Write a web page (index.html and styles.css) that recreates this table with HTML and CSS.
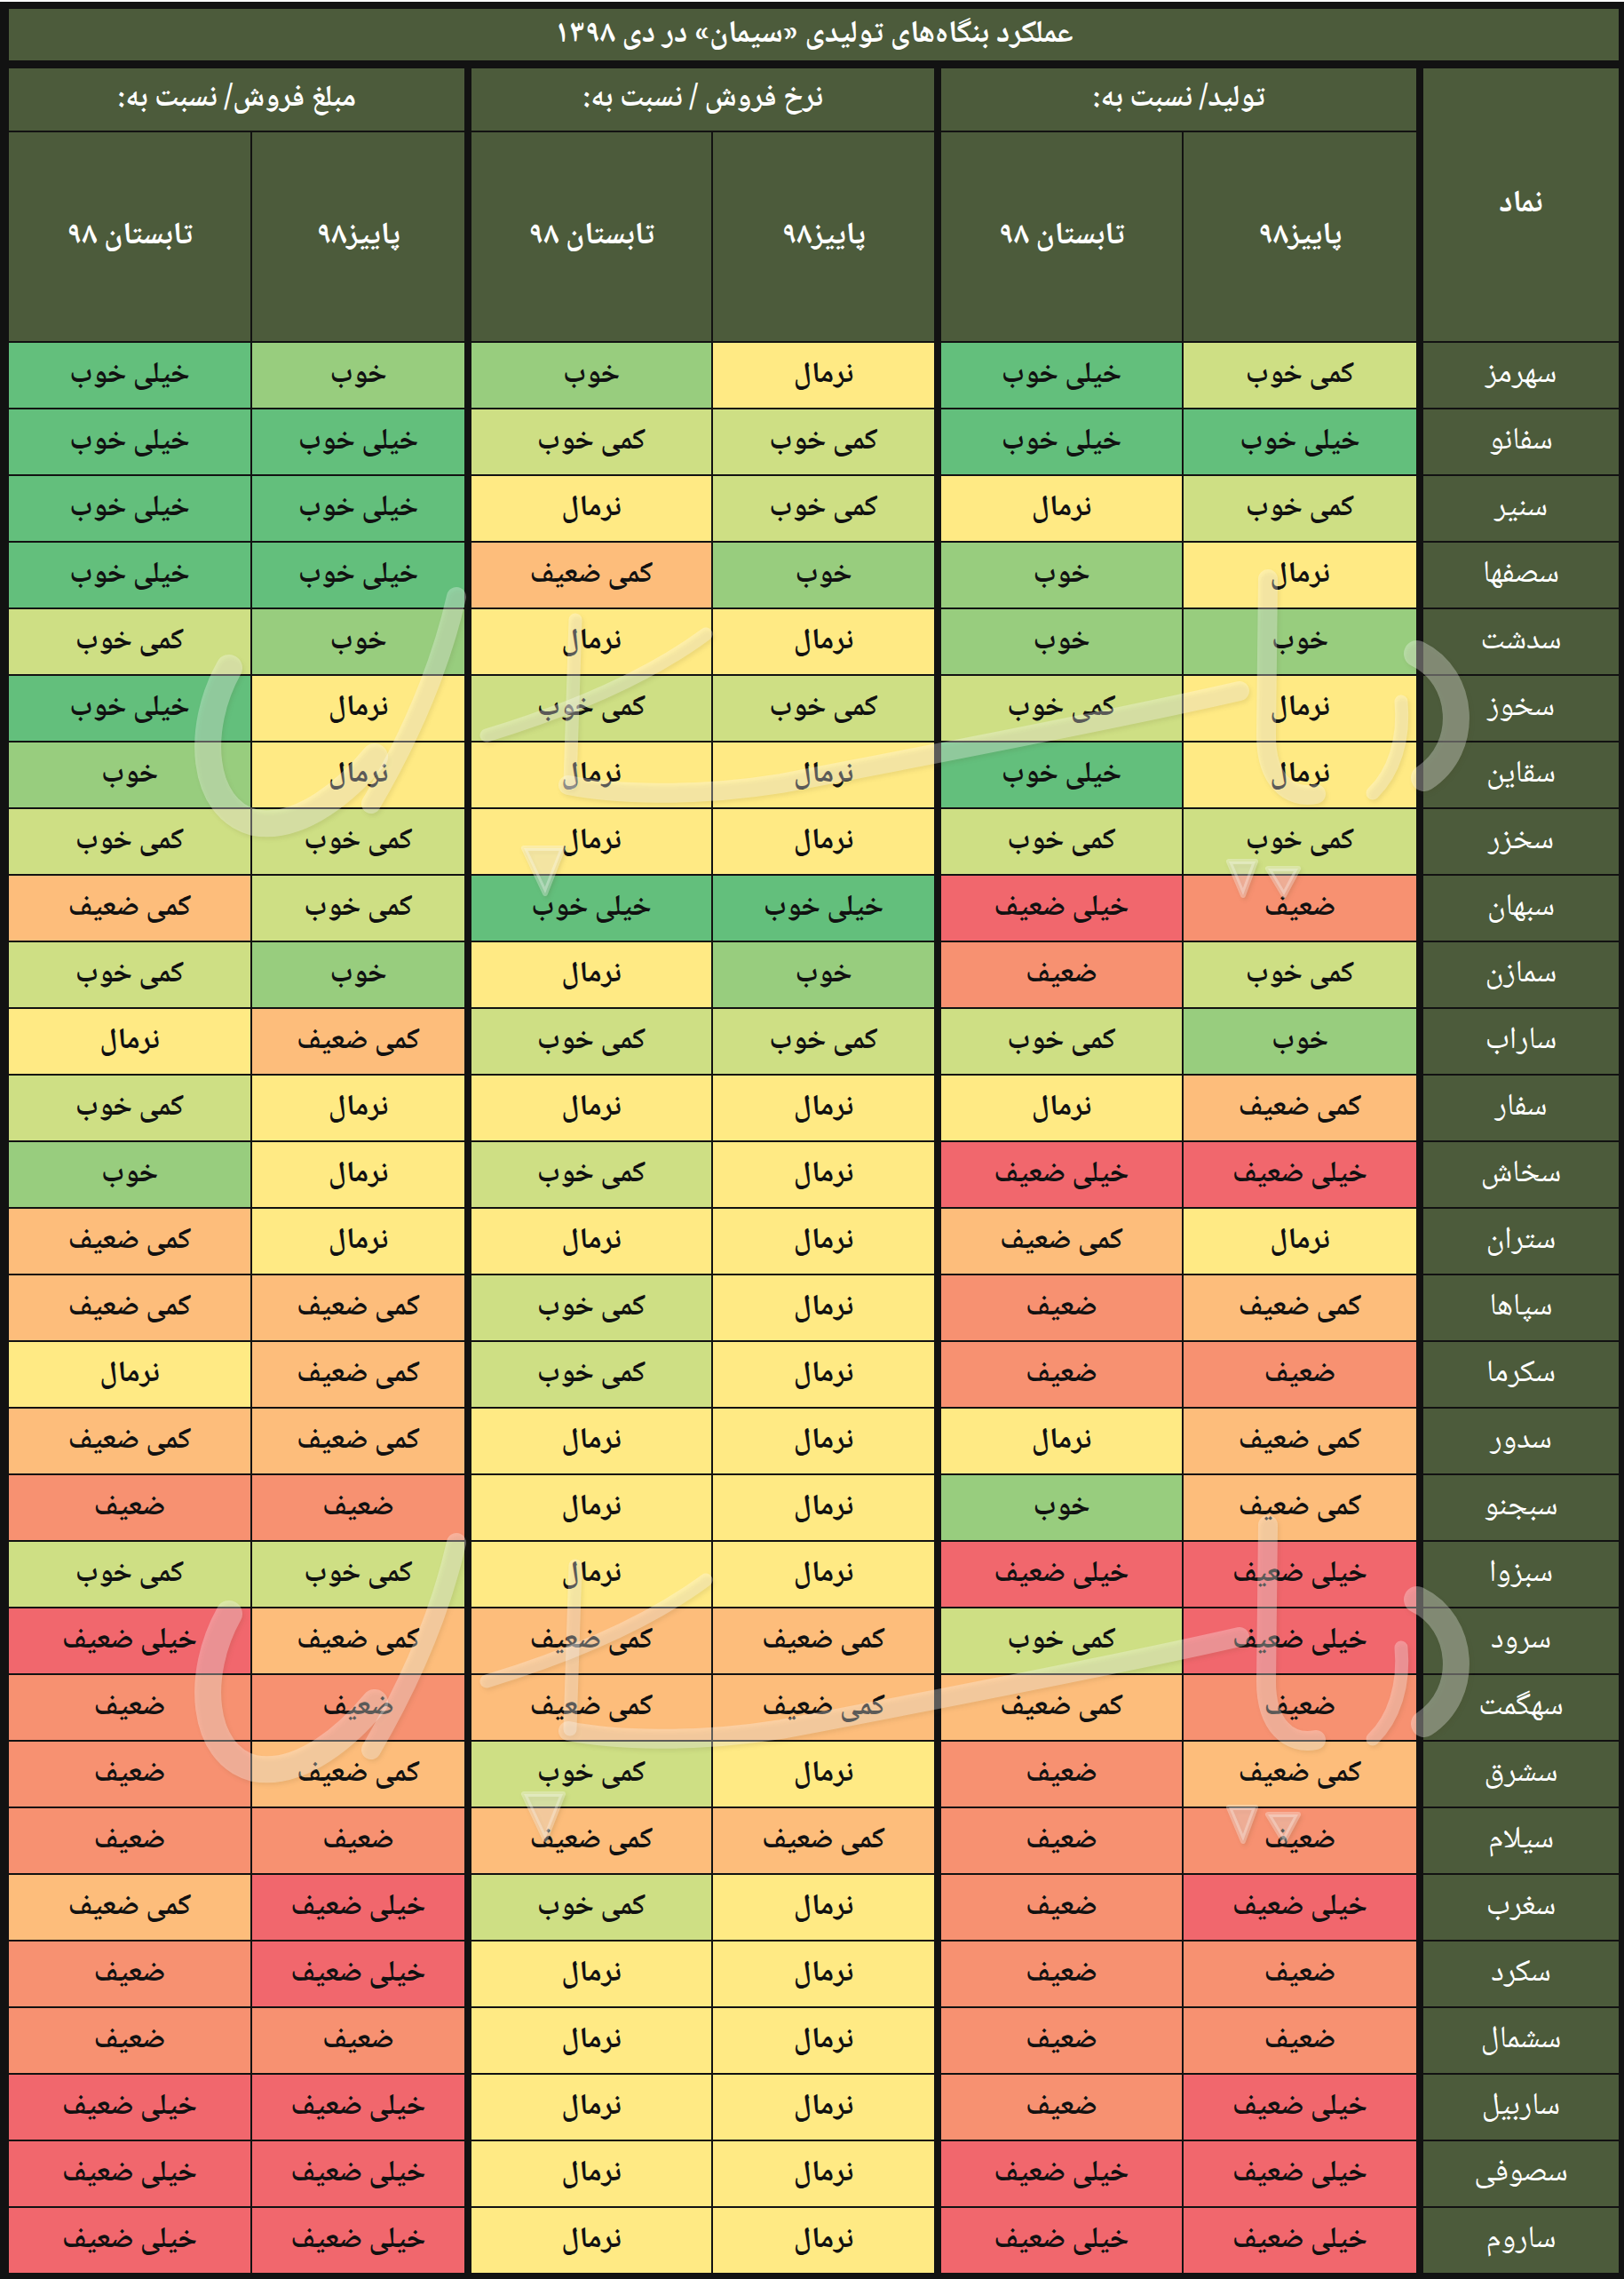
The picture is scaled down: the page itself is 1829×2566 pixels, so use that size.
FILE: index.html
```html
<!DOCTYPE html>
<html lang="fa" dir="rtl">
<head>
<meta charset="utf-8">
<title>عملکرد بنگاه‌های تولیدی سیمان</title>
<link rel="stylesheet" href="styles.css">
</head>
<body>
<div class="sheet">
  <div class="title">عملکرد بنگاه‌های تولیدی «سیمان» در دی ۱۳۹۸</div>
  <div class="head">
    <div class="name-h">نماد</div>
    <div class="hgrp prod">
      <div class="hgrp-title">تولید/ نسبت به:</div>
      <div class="hsub"><div class="fall">پاییز۹۸</div><div class="summer">تابستان ۹۸</div></div>
    </div>
    <div class="hgrp rate">
      <div class="hgrp-title">نرخ فروش / نسبت به:</div>
      <div class="hsub"><div class="fall">پاییز۹۸</div><div class="summer">تابستان ۹۸</div></div>
    </div>
    <div class="hgrp amount">
      <div class="hgrp-title">مبلغ فروش/ نسبت به:</div>
      <div class="hsub"><div class="fall">پاییز۹۸</div><div class="summer">تابستان ۹۸</div></div>
    </div>
  </div>
  <div class="rows">
    <div class="row"><div class="name">سهرمز</div><div class="grp prod"><div class="fall sg">کمی خوب</div><div class="summer vg">خیلی خوب</div></div><div class="grp rate"><div class="fall n">نرمال</div><div class="summer g">خوب</div></div><div class="grp amount"><div class="fall g">خوب</div><div class="summer vg">خیلی خوب</div></div></div>
    <div class="row"><div class="name">سفانو</div><div class="grp prod"><div class="fall vg">خیلی خوب</div><div class="summer vg">خیلی خوب</div></div><div class="grp rate"><div class="fall sg">کمی خوب</div><div class="summer sg">کمی خوب</div></div><div class="grp amount"><div class="fall vg">خیلی خوب</div><div class="summer vg">خیلی خوب</div></div></div>
    <div class="row"><div class="name">سنیر</div><div class="grp prod"><div class="fall sg">کمی خوب</div><div class="summer n">نرمال</div></div><div class="grp rate"><div class="fall sg">کمی خوب</div><div class="summer n">نرمال</div></div><div class="grp amount"><div class="fall vg">خیلی خوب</div><div class="summer vg">خیلی خوب</div></div></div>
    <div class="row"><div class="name">سصفها</div><div class="grp prod"><div class="fall n">نرمال</div><div class="summer g">خوب</div></div><div class="grp rate"><div class="fall g">خوب</div><div class="summer sw">کمی ضعیف</div></div><div class="grp amount"><div class="fall vg">خیلی خوب</div><div class="summer vg">خیلی خوب</div></div></div>
    <div class="row"><div class="name">سدشت</div><div class="grp prod"><div class="fall g">خوب</div><div class="summer g">خوب</div></div><div class="grp rate"><div class="fall n">نرمال</div><div class="summer n">نرمال</div></div><div class="grp amount"><div class="fall g">خوب</div><div class="summer sg">کمی خوب</div></div></div>
    <div class="row"><div class="name">سخوز</div><div class="grp prod"><div class="fall n">نرمال</div><div class="summer sg">کمی خوب</div></div><div class="grp rate"><div class="fall sg">کمی خوب</div><div class="summer sg">کمی خوب</div></div><div class="grp amount"><div class="fall n">نرمال</div><div class="summer vg">خیلی خوب</div></div></div>
    <div class="row"><div class="name">سقاین</div><div class="grp prod"><div class="fall n">نرمال</div><div class="summer vg">خیلی خوب</div></div><div class="grp rate"><div class="fall n">نرمال</div><div class="summer n">نرمال</div></div><div class="grp amount"><div class="fall n">نرمال</div><div class="summer g">خوب</div></div></div>
    <div class="row"><div class="name">سخزر</div><div class="grp prod"><div class="fall sg">کمی خوب</div><div class="summer sg">کمی خوب</div></div><div class="grp rate"><div class="fall n">نرمال</div><div class="summer n">نرمال</div></div><div class="grp amount"><div class="fall sg">کمی خوب</div><div class="summer sg">کمی خوب</div></div></div>
    <div class="row"><div class="name">سبهان</div><div class="grp prod"><div class="fall w">ضعیف</div><div class="summer vw">خیلی ضعیف</div></div><div class="grp rate"><div class="fall vg">خیلی خوب</div><div class="summer vg">خیلی خوب</div></div><div class="grp amount"><div class="fall sg">کمی خوب</div><div class="summer sw">کمی ضعیف</div></div></div>
    <div class="row"><div class="name">سمازن</div><div class="grp prod"><div class="fall sg">کمی خوب</div><div class="summer w">ضعیف</div></div><div class="grp rate"><div class="fall g">خوب</div><div class="summer n">نرمال</div></div><div class="grp amount"><div class="fall g">خوب</div><div class="summer sg">کمی خوب</div></div></div>
    <div class="row"><div class="name">ساراب</div><div class="grp prod"><div class="fall g">خوب</div><div class="summer sg">کمی خوب</div></div><div class="grp rate"><div class="fall sg">کمی خوب</div><div class="summer sg">کمی خوب</div></div><div class="grp amount"><div class="fall sw">کمی ضعیف</div><div class="summer n">نرمال</div></div></div>
    <div class="row"><div class="name">سفار</div><div class="grp prod"><div class="fall sw">کمی ضعیف</div><div class="summer n">نرمال</div></div><div class="grp rate"><div class="fall n">نرمال</div><div class="summer n">نرمال</div></div><div class="grp amount"><div class="fall n">نرمال</div><div class="summer sg">کمی خوب</div></div></div>
    <div class="row"><div class="name">سخاش</div><div class="grp prod"><div class="fall vw">خیلی ضعیف</div><div class="summer vw">خیلی ضعیف</div></div><div class="grp rate"><div class="fall n">نرمال</div><div class="summer sg">کمی خوب</div></div><div class="grp amount"><div class="fall n">نرمال</div><div class="summer g">خوب</div></div></div>
    <div class="row"><div class="name">ستران</div><div class="grp prod"><div class="fall n">نرمال</div><div class="summer sw">کمی ضعیف</div></div><div class="grp rate"><div class="fall n">نرمال</div><div class="summer n">نرمال</div></div><div class="grp amount"><div class="fall n">نرمال</div><div class="summer sw">کمی ضعیف</div></div></div>
    <div class="row"><div class="name">سپاها</div><div class="grp prod"><div class="fall sw">کمی ضعیف</div><div class="summer w">ضعیف</div></div><div class="grp rate"><div class="fall n">نرمال</div><div class="summer sg">کمی خوب</div></div><div class="grp amount"><div class="fall sw">کمی ضعیف</div><div class="summer sw">کمی ضعیف</div></div></div>
    <div class="row"><div class="name">سکرما</div><div class="grp prod"><div class="fall w">ضعیف</div><div class="summer w">ضعیف</div></div><div class="grp rate"><div class="fall n">نرمال</div><div class="summer sg">کمی خوب</div></div><div class="grp amount"><div class="fall sw">کمی ضعیف</div><div class="summer n">نرمال</div></div></div>
    <div class="row"><div class="name">سدور</div><div class="grp prod"><div class="fall sw">کمی ضعیف</div><div class="summer n">نرمال</div></div><div class="grp rate"><div class="fall n">نرمال</div><div class="summer n">نرمال</div></div><div class="grp amount"><div class="fall sw">کمی ضعیف</div><div class="summer sw">کمی ضعیف</div></div></div>
    <div class="row"><div class="name">سبجنو</div><div class="grp prod"><div class="fall sw">کمی ضعیف</div><div class="summer g">خوب</div></div><div class="grp rate"><div class="fall n">نرمال</div><div class="summer n">نرمال</div></div><div class="grp amount"><div class="fall w">ضعیف</div><div class="summer w">ضعیف</div></div></div>
    <div class="row"><div class="name">سبزوا</div><div class="grp prod"><div class="fall vw">خیلی ضعیف</div><div class="summer vw">خیلی ضعیف</div></div><div class="grp rate"><div class="fall n">نرمال</div><div class="summer n">نرمال</div></div><div class="grp amount"><div class="fall sg">کمی خوب</div><div class="summer sg">کمی خوب</div></div></div>
    <div class="row"><div class="name">سرود</div><div class="grp prod"><div class="fall vw">خیلی ضعیف</div><div class="summer sg">کمی خوب</div></div><div class="grp rate"><div class="fall sw">کمی ضعیف</div><div class="summer sw">کمی ضعیف</div></div><div class="grp amount"><div class="fall sw">کمی ضعیف</div><div class="summer vw">خیلی ضعیف</div></div></div>
    <div class="row"><div class="name">سهگمت</div><div class="grp prod"><div class="fall w">ضعیف</div><div class="summer sw">کمی ضعیف</div></div><div class="grp rate"><div class="fall sw">کمی ضعیف</div><div class="summer sw">کمی ضعیف</div></div><div class="grp amount"><div class="fall w">ضعیف</div><div class="summer w">ضعیف</div></div></div>
    <div class="row"><div class="name">سشرق</div><div class="grp prod"><div class="fall sw">کمی ضعیف</div><div class="summer w">ضعیف</div></div><div class="grp rate"><div class="fall n">نرمال</div><div class="summer sg">کمی خوب</div></div><div class="grp amount"><div class="fall sw">کمی ضعیف</div><div class="summer w">ضعیف</div></div></div>
    <div class="row"><div class="name">سیلام</div><div class="grp prod"><div class="fall w">ضعیف</div><div class="summer w">ضعیف</div></div><div class="grp rate"><div class="fall sw">کمی ضعیف</div><div class="summer sw">کمی ضعیف</div></div><div class="grp amount"><div class="fall w">ضعیف</div><div class="summer w">ضعیف</div></div></div>
    <div class="row"><div class="name">سغرب</div><div class="grp prod"><div class="fall vw">خیلی ضعیف</div><div class="summer w">ضعیف</div></div><div class="grp rate"><div class="fall n">نرمال</div><div class="summer sg">کمی خوب</div></div><div class="grp amount"><div class="fall vw">خیلی ضعیف</div><div class="summer sw">کمی ضعیف</div></div></div>
    <div class="row"><div class="name">سکرد</div><div class="grp prod"><div class="fall w">ضعیف</div><div class="summer w">ضعیف</div></div><div class="grp rate"><div class="fall n">نرمال</div><div class="summer n">نرمال</div></div><div class="grp amount"><div class="fall vw">خیلی ضعیف</div><div class="summer w">ضعیف</div></div></div>
    <div class="row"><div class="name">سشمال</div><div class="grp prod"><div class="fall w">ضعیف</div><div class="summer w">ضعیف</div></div><div class="grp rate"><div class="fall n">نرمال</div><div class="summer n">نرمال</div></div><div class="grp amount"><div class="fall w">ضعیف</div><div class="summer w">ضعیف</div></div></div>
    <div class="row"><div class="name">ساربیل</div><div class="grp prod"><div class="fall vw">خیلی ضعیف</div><div class="summer w">ضعیف</div></div><div class="grp rate"><div class="fall n">نرمال</div><div class="summer n">نرمال</div></div><div class="grp amount"><div class="fall vw">خیلی ضعیف</div><div class="summer vw">خیلی ضعیف</div></div></div>
    <div class="row"><div class="name">سصوفی</div><div class="grp prod"><div class="fall vw">خیلی ضعیف</div><div class="summer vw">خیلی ضعیف</div></div><div class="grp rate"><div class="fall n">نرمال</div><div class="summer n">نرمال</div></div><div class="grp amount"><div class="fall vw">خیلی ضعیف</div><div class="summer vw">خیلی ضعیف</div></div></div>
    <div class="row"><div class="name">ساروم</div><div class="grp prod"><div class="fall vw">خیلی ضعیف</div><div class="summer vw">خیلی ضعیف</div></div><div class="grp rate"><div class="fall n">نرمال</div><div class="summer n">نرمال</div></div><div class="grp amount"><div class="fall vw">خیلی ضعیف</div><div class="summer vw">خیلی ضعیف</div></div></div>
  </div>
  <svg class="watermark" viewBox="0 0 1829 2566" aria-hidden="true">
    <g id="wm">
      <path class="thick" d="M1596 736 C1650 762 1656 842 1604 876"/>
      <path class="thin" d="M1578 790 C1582 832 1570 870 1546 893"/>
      <path d="M1428 652 L1426 828 C1426 878 1452 900 1482 894"/>
      <path d="M1396 778 C1300 800 1100 840 880 882 C780 898 690 894 640 884"/>
      <path class="thin" d="M648 698 L642 882"/>
      <path class="thin" d="M795 714 C730 762 640 800 548 828"/>
      <path d="M514 672 C494 760 456 840 418 905"/>
      <path class="thick" d="M258 752 C220 820 226 910 286 926 C340 936 394 886 422 852"/>
      <path class="dot" d="M1384 970 L1414 970 L1400 1008 Z"/>
      <path class="dot" d="M1428 978 L1462 978 L1446 1008 Z"/>
      <path class="dot" d="M590 955 L634 955 L614 1006 Z"/>
    </g>
    <use href="#wm" transform="translate(0 1065)"/>
  </svg>
</div>
</body>
</html>
```
FILE: styles.css
```css
html, body {
  margin: 0;
  padding: 0;
  background: #ffffff;
}

body {
  font-family: "Noto Naskh Arabic", "Noto Sans Arabic", "DejaVu Sans", sans-serif;
}

.sheet {
  position: relative;
  direction: rtl;
  width: 1829px;
  height: 2564px;
  margin-top: 2px;
  box-sizing: border-box;
  padding: 8px 6px 7px 10px;
  background: #121212;
  overflow: hidden;
}

.title {
  height: 58px;
  margin-bottom: 9px;
  background: #4c5b3b;
  color: #ffffff;
  font-weight: bold;
  font-size: 35px;
  display: flex;
  align-items: center;
  justify-content: center;
}

.head {
  display: flex;
  gap: 8px;
  height: 307px;
  margin-bottom: 2px;
}

.name-h {
  width: 220px;
  background: #4c5b3b;
  color: #ffffff;
  font-size: 35px;
  font-weight: bold;
  display: flex;
  align-items: center;
  justify-content: center;
}

.hgrp {
  display: flex;
  flex-direction: column;
  gap: 2px;
}

.hgrp-title {
  height: 70px;
  background: #4c5b3b;
  color: #ffffff;
  font-size: 34px;
  font-weight: bold;
  display: flex;
  align-items: center;
  justify-content: center;
}

.hsub {
  display: flex;
  gap: 2px;
  height: 235px;
}

.hsub > div {
  background: #4c5b3b;
  color: #ffffff;
  font-size: 35px;
  font-weight: bold;
  display: flex;
  align-items: center;
  justify-content: center;
}

.rows {
  display: flex;
  flex-direction: column;
  gap: 2px;
}

.row {
  display: flex;
  gap: 8px;
  height: 73px;
}

.name {
  width: 220px;
  background: #4c5b3b;
  color: #ffffff;
  font-size: 35px;
  display: flex;
  align-items: center;
  justify-content: center;
}

.grp {
  display: flex;
  gap: 2px;
}

.grp > div {
  color: #111111;
  font-size: 33px;
  font-weight: bold;
  display: flex;
  align-items: center;
  justify-content: center;
}

.prod .fall { width: 262px; }
.prod .summer { width: 271px; }
.rate .fall { width: 249px; }
.rate .summer { width: 270px; }
.amount .fall { width: 239px; }
.amount .summer { width: 272px; }

.vg { background: #63bf7c; }
.g  { background: #98cd7e; }
.sg { background: #cedf84; }
.n  { background: #ffea84; }
.sw { background: #fdbd7b; }
.w  { background: #f79171; }
.vw { background: #f1676d; }

.watermark {
  position: absolute;
  left: 0;
  top: -2px;
  width: 1829px;
  height: 2566px;
  pointer-events: none;
  filter: drop-shadow(2px 3px 2px rgba(70, 60, 20, 0.3));
}

.watermark path {
  fill: none;
  stroke: rgba(255, 255, 255, 0.3);
  stroke-width: 22;
  stroke-linecap: round;
  stroke-linejoin: round;
}

.watermark path.thick {
  stroke-width: 30;
}

.watermark path.thin {
  stroke-width: 15;
}

.watermark path.dot {
  fill: rgba(255, 255, 255, 0.3);
  stroke-width: 6;
}
```
